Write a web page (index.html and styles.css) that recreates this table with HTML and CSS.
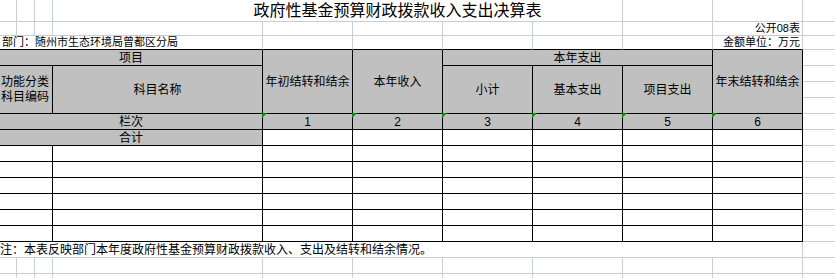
FILE: index.html
```html
<!DOCTYPE html>
<html lang="zh-CN">
<head>
<meta charset="utf-8">
<title>政府性基金预算财政拨款收入支出决算表</title>
<link rel="stylesheet" href="styles.css">
</head>
<body>
<div class="sheet">
  <!-- row 1 -->
  <div class="c"></div><div class="c"></div><div class="c"></div>
  <div class="c s5 title">政府性基金预算财政拨款收入支出决算表</div>
  <div class="c"></div><div class="c"></div><div class="c k"></div>
  <!-- row 2 -->
  <div class="c"></div><div class="c"></div><div class="c"></div><div class="c"></div><div class="c"></div>
  <div class="c"></div><div class="c"></div><div class="c"></div><div class="c"></div>
  <div class="c small right">公开08表</div><div class="c k"></div>
  <!-- row 3 -->
  <div class="c s4 bb small left">部门：随州市生态环境局曾都区分局</div>
  <div class="c bb"></div><div class="c bb"></div><div class="c bb"></div><div class="c bb"></div><div class="c bb"></div>
  <div class="c bb small right">金额单位：万元</div><div class="c k"></div>
  <!-- row 4 -->
  <div class="c s4 t g">项目</div>
  <div class="c r4 t g">年初结转和结余</div>
  <div class="c r4 t g">本年收入</div>
  <div class="c s3 t g">本年支出</div>
  <div class="c r4 t g">年末结转和结余</div>
  <div class="c k"></div>
  <!-- row 5 -->
  <div class="c s3 r3 t g left two">功能分类<br>科目编码</div>
  <div class="c r3 t g">科目名称</div>
  <div class="c r3 t g">小计</div>
  <div class="c r3 t g">基本支出</div>
  <div class="c r3 t g">项目支出</div>
  <div class="c k"></div>
  <!-- rows 6-7 -->
  <div class="c k"></div>
  <div class="c k"></div>
  <!-- row 8 -->
  <div class="c s4 t g low">栏次</div>
  <div class="c t g tri">1</div><div class="c t g tri">2</div><div class="c t g tri">3</div>
  <div class="c t g tri">4</div><div class="c t g tri">5</div><div class="c t g tri">6</div>
  <div class="c k"></div>
  <!-- row 9 -->
  <div class="c s4 t g low">合计</div>
  <div class="c t"></div><div class="c t"></div><div class="c t"></div><div class="c t"></div><div class="c t"></div><div class="c t"></div>
  <div class="c k"></div>
  <!-- rows 10-15 -->
  <div class="c s3 t"></div><div class="c t"></div><div class="c t"></div><div class="c t"></div><div class="c t"></div><div class="c t"></div><div class="c t"></div><div class="c t"></div><div class="c k"></div>
  <div class="c s3 t"></div><div class="c t"></div><div class="c t"></div><div class="c t"></div><div class="c t"></div><div class="c t"></div><div class="c t"></div><div class="c t"></div><div class="c k"></div>
  <div class="c s3 t"></div><div class="c t"></div><div class="c t"></div><div class="c t"></div><div class="c t"></div><div class="c t"></div><div class="c t"></div><div class="c t"></div><div class="c k"></div>
  <div class="c s3 t"></div><div class="c t"></div><div class="c t"></div><div class="c t"></div><div class="c t"></div><div class="c t"></div><div class="c t"></div><div class="c t"></div><div class="c k"></div>
  <div class="c s3 t"></div><div class="c t"></div><div class="c t"></div><div class="c t"></div><div class="c t"></div><div class="c t"></div><div class="c t"></div><div class="c t"></div><div class="c k"></div>
  <div class="c s3 t"></div><div class="c t"></div><div class="c t"></div><div class="c t"></div><div class="c t"></div><div class="c t"></div><div class="c t"></div><div class="c t"></div><div class="c k"></div>
  <!-- row 16 -->
  <div class="c s10 left note">注：本表反映部门本年度政府性基金预算财政拨款收入、支出及结转和结余情况。</div>
  <div class="c k"></div>
  <!-- rows 17-18 -->
  <div class="c"></div><div class="c"></div><div class="c"></div><div class="c"></div><div class="c"></div><div class="c"></div><div class="c"></div><div class="c"></div><div class="c"></div><div class="c"></div><div class="c k"></div>
  <div class="c"></div><div class="c"></div><div class="c"></div><div class="c"></div><div class="c"></div><div class="c"></div><div class="c"></div><div class="c"></div><div class="c"></div><div class="c"></div><div class="c k"></div>
</div>
</body>
</html>
```
FILE: styles.css
```css
html, body {
  margin: 0;
  padding: 0;
  background: #ffffff;
  overflow: hidden;
}

body {
  width: 835px;
  height: 278px;
  font-family: "Liberation Sans", "Noto Sans CJK SC", sans-serif;
  color: #000000;
}

.sheet {
  display: grid;
  grid-template-columns: 17px 18px 18px 210px repeat(6, 90px) 32px;
  grid-template-rows: 22px 14px 14px repeat(15, 16px);
}

.c {
  box-sizing: border-box;
  border-right: 1px solid #c9cdd8;
  border-bottom: 1px solid #c9cdd8;
  display: flex;
  align-items: center;
  justify-content: center;
  text-align: center;
  font-size: 12px;
  line-height: 14px;
  white-space: nowrap;
  min-width: 0;
}

.k { border-right: none; }

.t {
  border-right-color: #000000;
  border-bottom-color: #000000;
}

.bb { border-bottom-color: #000000; }

.g { background: #c0c0c0; }

.s3 { grid-column: span 3; }
.s4 { grid-column: span 4; }
.s5 { grid-column: span 5; }
.s10 { grid-column: span 10; }
.r3 { grid-row: span 3; }
.r4 { grid-row: span 4; }

.title {
  font-size: 16px;
  line-height: 18px;
  align-items: flex-end;
  padding-left: 120px;
  padding-bottom: 1px;
}

.small {
  font-size: 11px;
  line-height: 13px;
  align-items: flex-end;
}

.left {
  justify-content: flex-start;
  text-align: left;
  padding-left: 2px;
}

.right {
  justify-content: flex-end;
  text-align: right;
  padding-right: 2px;
}

.two {
  line-height: 15px;
  padding-left: 1px;
}

.low {
  align-items: flex-end;
}

.note {
  padding-left: 0;
  align-items: flex-end;
}

.tri { position: relative; }

.tri::before {
  content: "";
  position: absolute;
  left: -1px;
  top: -1px;
  width: 0;
  height: 0;
  border-top: 5px solid #0b8a0b;
  border-right: 5px solid transparent;
}
```
